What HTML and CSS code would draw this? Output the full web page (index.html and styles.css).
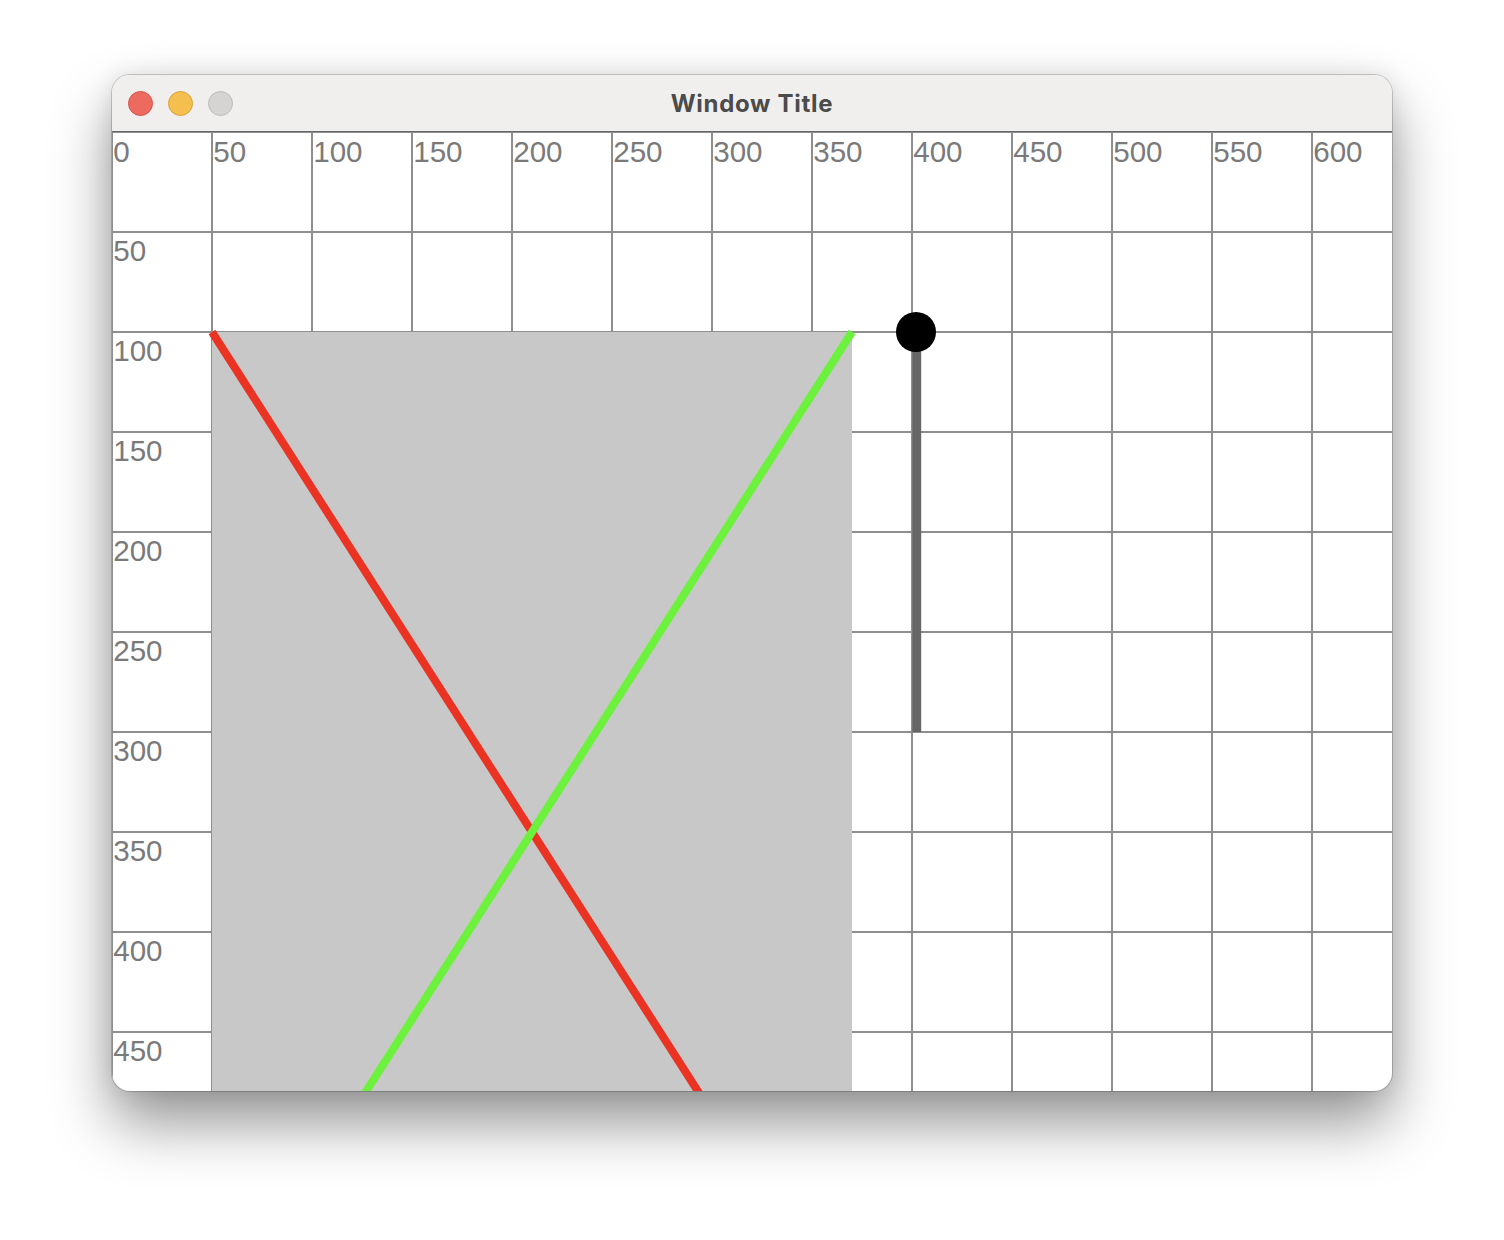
FILE: index.html
```html
<!DOCTYPE html>
<html>
<head>
<meta charset="utf-8">
<link rel="stylesheet" href="styles.css">
</head>
<body>
<div class="window">
  <div class="titlebar">
    <div class="lights">
      <span class="light red"></span>
      <span class="light yellow"></span>
      <span class="light gray"></span>
    </div>
    <div class="title">Window Title</div>
  </div>
  <svg class="canvas" width="1280" height="959" viewBox="0 0 640 479.5">
    <g class="grid">
      <line x1="0" y1="0" x2="0" y2="480"/>
      <line x1="50" y1="0" x2="50" y2="480"/>
      <line x1="100" y1="0" x2="100" y2="480"/>
      <line x1="150" y1="0" x2="150" y2="480"/>
      <line x1="200" y1="0" x2="200" y2="480"/>
      <line x1="250" y1="0" x2="250" y2="480"/>
      <line x1="300" y1="0" x2="300" y2="480"/>
      <line x1="350" y1="0" x2="350" y2="480"/>
      <line x1="400" y1="0" x2="400" y2="480"/>
      <line x1="450" y1="0" x2="450" y2="480"/>
      <line x1="500" y1="0" x2="500" y2="480"/>
      <line x1="550" y1="0" x2="550" y2="480"/>
      <line x1="600" y1="0" x2="600" y2="480"/>
      <line x1="0" y1="0" x2="640" y2="0"/>
      <line x1="0" y1="50" x2="640" y2="50"/>
      <line x1="0" y1="100" x2="640" y2="100"/>
      <line x1="0" y1="150" x2="640" y2="150"/>
      <line x1="0" y1="200" x2="640" y2="200"/>
      <line x1="0" y1="250" x2="640" y2="250"/>
      <line x1="0" y1="300" x2="640" y2="300"/>
      <line x1="0" y1="350" x2="640" y2="350"/>
      <line x1="0" y1="400" x2="640" y2="400"/>
      <line x1="0" y1="450" x2="640" y2="450"/>
    </g>
    <g class="labels">
      <text x="0.6" y="14.8">0</text>
      <text x="50.6" y="14.8">50</text>
      <text x="100.6" y="14.8">100</text>
      <text x="150.6" y="14.8">150</text>
      <text x="200.6" y="14.8">200</text>
      <text x="250.6" y="14.8">250</text>
      <text x="300.6" y="14.8">300</text>
      <text x="350.6" y="14.8">350</text>
      <text x="400.6" y="14.8">400</text>
      <text x="450.6" y="14.8">450</text>
      <text x="500.6" y="14.8">500</text>
      <text x="550.6" y="14.8">550</text>
      <text x="600.6" y="14.8">600</text>
      <text x="0.6" y="64.3">50</text>
      <text x="0.6" y="114.3">100</text>
      <text x="0.6" y="164.3">150</text>
      <text x="0.6" y="214.3">200</text>
      <text x="0.6" y="264.3">250</text>
      <text x="0.6" y="314.3">300</text>
      <text x="0.6" y="364.3">350</text>
      <text x="0.6" y="414.3">400</text>
      <text x="0.6" y="464.3">450</text>
    </g>
    <rect class="box" x="50" y="100" width="320" height="400"/>
    <line class="red-line" x1="50" y1="100" x2="370" y2="600"/>
    <line class="green-line" x1="370" y1="100" x2="50" y2="600"/>
    <rect class="bar" x="400.2" y="100" width="4.4" height="200"/>
    <circle class="knob" cx="402" cy="100" r="10"/>
  </svg>
</div>
</body>
</html>
```

FILE: styles.css
```css
html, body {
  margin: 0;
  padding: 0;
  background: #ffffff;
}

body {
  width: 1504px;
  height: 1240px;
  overflow: hidden;
  padding-top: 75px;
  padding-left: 112px;
  box-sizing: border-box;
}

.window {
  width: 1280px;
  height: 1016px;
  border-radius: 18px;
  overflow: hidden;
  background: #ffffff;
  box-shadow: 0 0 0 1px rgba(0, 0, 0, 0.18),
              0 32px 60px rgba(0, 0, 0, 0.42),
              0 0 24px rgba(0, 0, 0, 0.1);
  display: flex;
  flex-direction: column;
}

.titlebar {
  height: 56px;
  flex: 0 0 56px;
  background: #f0efed;
  border-bottom: 1px solid #666666;
  display: flex;
  align-items: center;
  position: relative;
}

.lights {
  display: flex;
  gap: 15px;
  padding-left: 16px;
  padding-top: 1px;
}

.light {
  width: 25px;
  height: 25px;
  border-radius: 50%;
  box-sizing: border-box;
}

.red {
  background: #ed6a5e;
  border: 1px solid #d65246;
}

.yellow {
  background: #f5bf4f;
  border: 1px solid #d9a138;
}

.gray {
  background: #d5d4d2;
  border: 1px solid #bdbbb9;
}

.title {
  position: absolute;
  left: 0;
  right: 0;
  top: 0;
  bottom: 0;
  display: flex;
  align-items: center;
  justify-content: center;
  font-family: "Inter", "Liberation Sans", sans-serif;
  font-weight: 700;
  font-size: 24px;
  letter-spacing: 0.7px;
  color: #4b4b4b;
  padding-top: 1px;
}

.canvas {
  display: block;
  flex: 0 0 959px;
}

.grid line {
  stroke: #8e8e8e;
  stroke-width: 1;
}

.labels text {
  font-family: "Liberation Sans", Arial, sans-serif;
  font-size: 14.8px;
  fill: #7a7a7a;
}

.box {
  fill: #c8c8c8;
}

.red-line {
  stroke: #eb3323;
  stroke-width: 4;
}

.green-line {
  stroke: #6cf23c;
  stroke-width: 4;
}

.bar {
  fill: #666666;
}

.knob {
  fill: #000000;
}
```
